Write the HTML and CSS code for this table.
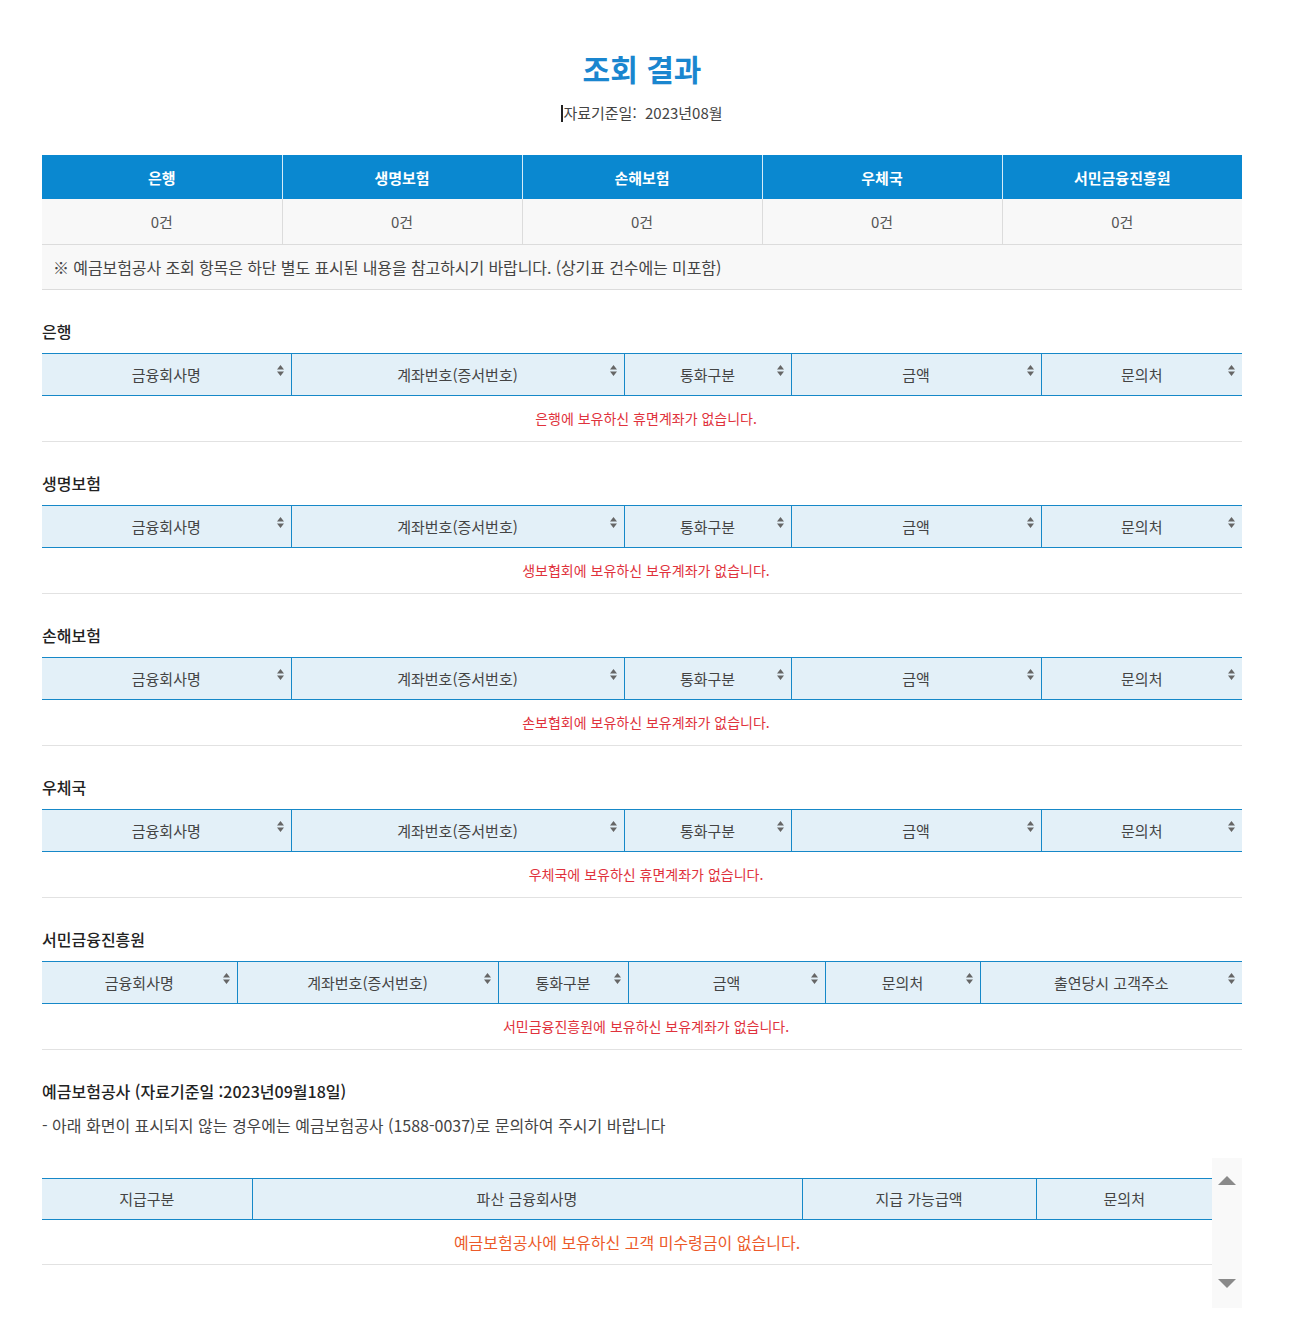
FILE: index.html
```html
<!DOCTYPE html>
<html lang="ko">
<head>
<meta charset="utf-8">
<title>조회 결과</title>
<link rel="stylesheet" href="styles.css">
</head>
<body>
<div class="page">
  <h1 class="title">조회 결과</h1>
  <p class="basis"><span class="caret"></span>자료기준일:&nbsp; 2023년08월</p>

  <table class="summary">
    <thead>
      <tr><th>은행</th><th>생명보험</th><th>손해보험</th><th>우체국</th><th>서민금융진흥원</th></tr>
    </thead>
    <tbody>
      <tr class="counts"><td>0건</td><td>0건</td><td>0건</td><td>0건</td><td>0건</td></tr>
      <tr class="note"><td colspan="5">※ 예금보험공사 조회 항목은 하단 별도 표시된 내용을 참고하시기 바랍니다. (상기표 건수에는 미포함)</td></tr>
    </tbody>
  </table>

  <section class="section">
    <h2 class="label">은행</h2>
    <table class="grid">
      <colgroup><col class="c5a"><col class="c5b"><col class="c5c"><col class="c5d"><col class="c5e"></colgroup>
      <thead><tr>
        <th>금융회사명<svg class="sort" viewBox="0 0 7 11"><path d="M0 4.5L3.5 0L7 4.5Z M0 6.5L3.5 11L7 6.5Z"/></svg></th>
        <th>계좌번호(증서번호)<svg class="sort" viewBox="0 0 7 11"><path d="M0 4.5L3.5 0L7 4.5Z M0 6.5L3.5 11L7 6.5Z"/></svg></th>
        <th>통화구분<svg class="sort" viewBox="0 0 7 11"><path d="M0 4.5L3.5 0L7 4.5Z M0 6.5L3.5 11L7 6.5Z"/></svg></th>
        <th>금액<svg class="sort" viewBox="0 0 7 11"><path d="M0 4.5L3.5 0L7 4.5Z M0 6.5L3.5 11L7 6.5Z"/></svg></th>
        <th>문의처<svg class="sort" viewBox="0 0 7 11"><path d="M0 4.5L3.5 0L7 4.5Z M0 6.5L3.5 11L7 6.5Z"/></svg></th>
      </tr></thead>
      <tbody><tr><td class="empty" colspan="5">은행에 보유하신 휴면계좌가 없습니다.</td></tr></tbody>
    </table>
  </section>

  <section class="section">
    <h2 class="label">생명보험</h2>
    <table class="grid">
      <colgroup><col class="c5a"><col class="c5b"><col class="c5c"><col class="c5d"><col class="c5e"></colgroup>
      <thead><tr>
        <th>금융회사명<svg class="sort" viewBox="0 0 7 11"><path d="M0 4.5L3.5 0L7 4.5Z M0 6.5L3.5 11L7 6.5Z"/></svg></th>
        <th>계좌번호(증서번호)<svg class="sort" viewBox="0 0 7 11"><path d="M0 4.5L3.5 0L7 4.5Z M0 6.5L3.5 11L7 6.5Z"/></svg></th>
        <th>통화구분<svg class="sort" viewBox="0 0 7 11"><path d="M0 4.5L3.5 0L7 4.5Z M0 6.5L3.5 11L7 6.5Z"/></svg></th>
        <th>금액<svg class="sort" viewBox="0 0 7 11"><path d="M0 4.5L3.5 0L7 4.5Z M0 6.5L3.5 11L7 6.5Z"/></svg></th>
        <th>문의처<svg class="sort" viewBox="0 0 7 11"><path d="M0 4.5L3.5 0L7 4.5Z M0 6.5L3.5 11L7 6.5Z"/></svg></th>
      </tr></thead>
      <tbody><tr><td class="empty" colspan="5">생보협회에 보유하신 보유계좌가 없습니다.</td></tr></tbody>
    </table>
  </section>

  <section class="section">
    <h2 class="label">손해보험</h2>
    <table class="grid">
      <colgroup><col class="c5a"><col class="c5b"><col class="c5c"><col class="c5d"><col class="c5e"></colgroup>
      <thead><tr>
        <th>금융회사명<svg class="sort" viewBox="0 0 7 11"><path d="M0 4.5L3.5 0L7 4.5Z M0 6.5L3.5 11L7 6.5Z"/></svg></th>
        <th>계좌번호(증서번호)<svg class="sort" viewBox="0 0 7 11"><path d="M0 4.5L3.5 0L7 4.5Z M0 6.5L3.5 11L7 6.5Z"/></svg></th>
        <th>통화구분<svg class="sort" viewBox="0 0 7 11"><path d="M0 4.5L3.5 0L7 4.5Z M0 6.5L3.5 11L7 6.5Z"/></svg></th>
        <th>금액<svg class="sort" viewBox="0 0 7 11"><path d="M0 4.5L3.5 0L7 4.5Z M0 6.5L3.5 11L7 6.5Z"/></svg></th>
        <th>문의처<svg class="sort" viewBox="0 0 7 11"><path d="M0 4.5L3.5 0L7 4.5Z M0 6.5L3.5 11L7 6.5Z"/></svg></th>
      </tr></thead>
      <tbody><tr><td class="empty" colspan="5">손보협회에 보유하신 보유계좌가 없습니다.</td></tr></tbody>
    </table>
  </section>

  <section class="section">
    <h2 class="label">우체국</h2>
    <table class="grid">
      <colgroup><col class="c5a"><col class="c5b"><col class="c5c"><col class="c5d"><col class="c5e"></colgroup>
      <thead><tr>
        <th>금융회사명<svg class="sort" viewBox="0 0 7 11"><path d="M0 4.5L3.5 0L7 4.5Z M0 6.5L3.5 11L7 6.5Z"/></svg></th>
        <th>계좌번호(증서번호)<svg class="sort" viewBox="0 0 7 11"><path d="M0 4.5L3.5 0L7 4.5Z M0 6.5L3.5 11L7 6.5Z"/></svg></th>
        <th>통화구분<svg class="sort" viewBox="0 0 7 11"><path d="M0 4.5L3.5 0L7 4.5Z M0 6.5L3.5 11L7 6.5Z"/></svg></th>
        <th>금액<svg class="sort" viewBox="0 0 7 11"><path d="M0 4.5L3.5 0L7 4.5Z M0 6.5L3.5 11L7 6.5Z"/></svg></th>
        <th>문의처<svg class="sort" viewBox="0 0 7 11"><path d="M0 4.5L3.5 0L7 4.5Z M0 6.5L3.5 11L7 6.5Z"/></svg></th>
      </tr></thead>
      <tbody><tr><td class="empty" colspan="5">우체국에 보유하신 휴면계좌가 없습니다.</td></tr></tbody>
    </table>
  </section>

  <section class="section">
    <h2 class="label">서민금융진흥원</h2>
    <table class="grid">
      <colgroup><col class="c6a"><col class="c6b"><col class="c6c"><col class="c6d"><col class="c6e"><col class="c6f"></colgroup>
      <thead><tr>
        <th>금융회사명<svg class="sort" viewBox="0 0 7 11"><path d="M0 4.5L3.5 0L7 4.5Z M0 6.5L3.5 11L7 6.5Z"/></svg></th>
        <th>계좌번호(증서번호)<svg class="sort" viewBox="0 0 7 11"><path d="M0 4.5L3.5 0L7 4.5Z M0 6.5L3.5 11L7 6.5Z"/></svg></th>
        <th>통화구분<svg class="sort" viewBox="0 0 7 11"><path d="M0 4.5L3.5 0L7 4.5Z M0 6.5L3.5 11L7 6.5Z"/></svg></th>
        <th>금액<svg class="sort" viewBox="0 0 7 11"><path d="M0 4.5L3.5 0L7 4.5Z M0 6.5L3.5 11L7 6.5Z"/></svg></th>
        <th>문의처<svg class="sort" viewBox="0 0 7 11"><path d="M0 4.5L3.5 0L7 4.5Z M0 6.5L3.5 11L7 6.5Z"/></svg></th>
        <th>출연당시 고객주소<svg class="sort" viewBox="0 0 7 11"><path d="M0 4.5L3.5 0L7 4.5Z M0 6.5L3.5 11L7 6.5Z"/></svg></th>
      </tr></thead>
      <tbody><tr><td class="empty" colspan="6">서민금융진흥원에 보유하신 보유계좌가 없습니다.</td></tr></tbody>
    </table>
  </section>

  <section class="kdic">
    <h2 class="label">예금보험공사 (자료기준일 :2023년09월18일)</h2>
    <p class="desc">- 아래 화면이 표시되지 않는 경우에는 예금보험공사 (1588-0037)로 문의하여 주시기 바랍니다</p>
    <div class="frame">
      <div class="frame-body">
        <table class="grid kdic-table">
          <colgroup><col class="k1"><col class="k2"><col class="k3"><col class="k4"></colgroup>
          <thead><tr><th>지급구분</th><th>파산 금융회사명</th><th>지급 가능급액</th><th>문의처</th></tr></thead>
          <tbody><tr><td class="empty big" colspan="4">예금보험공사에 보유하신 고객 미수령금이 없습니다.</td></tr></tbody>
        </table>
      </div>
      <div class="scrollbar">
        <span class="arrow up"></span>
        <span class="arrow down"></span>
      </div>
    </div>
  </section>
</div>
</body>
</html>
```

FILE: styles.css
```css
* { box-sizing: border-box; }
html, body { margin: 0; padding: 0; background: #fff; }
body {
  font-family: "Noto Sans CJK KR", "Noto Sans", "Malgun Gothic", sans-serif;
  color: #333;
}
.page {
  width: 1242px;
  padding: 48px 0 40px 42px;
}
.title {
  margin: 0;
  text-align: center;
  font-size: 30px;
  line-height: 40px;
  font-weight: 700;
  color: #1a86cf;
}
.basis {
  margin: 15px 0 0;
  text-align: center;
  font-size: 15px;
  line-height: 20px;
  color: #444;
}
.caret {
  display: inline-block;
  width: 2px;
  height: 17px;
  background: #222;
  vertical-align: -3px;
}

table { border-collapse: collapse; table-layout: fixed; width: 1200px; }

.summary { margin-top: 32px; }
.summary th {
  height: 44px;
  padding: 0;
  background: #0a88d0;
  color: #fff;
  font-size: 15px;
  font-weight: 700;
  border-left: 1px solid #d6ecf8;
}
.summary th:first-child, .summary .counts td:first-child { border-left: 0; }
.summary .counts td {
  height: 45px;
  padding: 0;
  text-align: center;
  background: #f8f8f8;
  color: #555;
  font-size: 15px;
  border-left: 1px solid #dcdcdc;
  border-bottom: 1px solid #dcdcdc;
}
.summary .note td {
  height: 45px;
  padding: 0 0 0 11px;
  background: #f8f8f8;
  color: #444;
  font-size: 16px;
  letter-spacing: -0.1px;
  border-bottom: 1px solid #dcdcdc;
}

.section { margin-top: 30px; }
.label {
  margin: 0;
  font-size: 16px;
  line-height: 22px;
  font-weight: 500;
  color: #222;
}
.section .grid { margin-top: 11px; }

.grid th {
  position: relative;
  height: 42px;
  padding: 0;
  background: #e3f0f8;
  border-top: 1px solid #1688c8;
  border-bottom: 1px solid #1688c8;
  border-left: 1px solid #1688c8;
  font-size: 15px;
  font-weight: 400;
  color: #444;
  text-align: center;
}
.grid th:first-child { border-left: 0; }
.sort {
  position: absolute;
  right: 7px;
  top: 11px;
  width: 7px;
  height: 11px;
  fill: #666;
}
.grid td.empty {
  height: 46px;
  padding: 0 0 0 8px;
  text-align: center;
  font-size: 14px;
  color: #e0323c;
  border-bottom: 1px solid #e2e2e2;
}
.grid td.empty.big {
  height: 45px;
  padding: 0;
  font-size: 16px;
  color: #ec5a2a;
}

.c5a { width: 249px; } .c5b { width: 333px; } .c5c { width: 167px; } .c5d { width: 250px; } .c5e { width: 201px; }
.c6a { width: 195px; } .c6b { width: 261px; } .c6c { width: 130px; } .c6d { width: 197px; } .c6e { width: 155px; } .c6f { width: 262px; }
.k1 { width: 210px; } .k2 { width: 550px; } .k3 { width: 234px; } .k4 { width: 176px; }

.kdic { margin-top: 30px; }
.desc {
  margin: 13px 0 0;
  font-size: 16px;
  line-height: 20px;
  color: #444;
}
.frame {
  display: flex;
  width: 1200px;
  height: 150px;
  margin-top: 23px;
}
.frame-body { width: 1170px; padding-top: 20px; }
.kdic-table { width: 1170px; }
.kdic-table th { height: 41px; font-size: 15px; }
.scrollbar {
  width: 30px;
  height: 150px;
  background: #f9f9f9;
  display: flex;
  flex-direction: column;
  justify-content: space-between;
  align-items: center;
  padding: 18px 0 20px;
}
.arrow { width: 0; height: 0; border-left: 9px solid transparent; border-right: 9px solid transparent; }
.arrow.up { border-bottom: 9px solid #8a8a8a; }
.arrow.down { border-top: 9px solid #8a8a8a; }
```
